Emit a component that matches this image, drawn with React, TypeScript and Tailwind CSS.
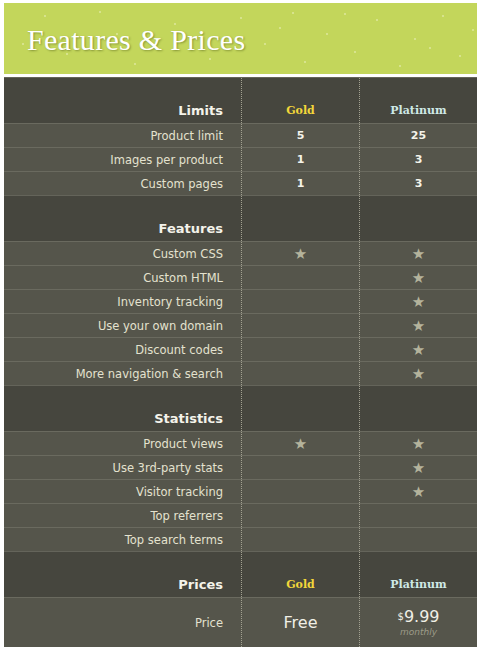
import React from "react";

type Row = { label: string; gold?: string; platinum?: string; star?: boolean };

const sections: { title: string; rows: Row[] }[] = [
  {
    title: "Limits",
    rows: [
      { label: "Product limit", gold: "5", platinum: "25" },
      { label: "Images per product", gold: "1", platinum: "3" },
      { label: "Custom pages", gold: "1", platinum: "3" },
    ],
  },
  {
    title: "Features",
    rows: [
      { label: "Custom CSS", gold: "★", platinum: "★", star: true },
      { label: "Custom HTML", platinum: "★", star: true },
      { label: "Inventory tracking", platinum: "★", star: true },
      { label: "Use your own domain", platinum: "★", star: true },
      { label: "Discount codes", platinum: "★", star: true },
      { label: "More navigation & search", platinum: "★", star: true },
    ],
  },
  {
    title: "Statistics",
    rows: [
      { label: "Product views", gold: "★", platinum: "★", star: true },
      { label: "Use 3rd-party stats", platinum: "★", star: true },
      { label: "Visitor tracking", platinum: "★", star: true },
      { label: "Top referrers" },
      { label: "Top search terms" },
    ],
  },
];

// speckles on the green banner
const specks = [
  [40, 12], [62, 50], [95, 8], [130, 60], [170, 20], [205, 55], [236, 14], [260, 40],
  [288, 9], [300, 58], [322, 30], [350, 48], [372, 16], [395, 62], [410, 35], [438, 12],
  [455, 52], [468, 26], [18, 40], [150, 42], [275, 24], [340, 10], [425, 44], [112, 30],
];

const colDivider = "border-r border-dotted border-r-[#a3a292]";

function PlanHeader({ title, showPlans }: { title: string; showPlans: boolean }) {
  return (
    <div className="grid grid-cols-[238px_118px_1fr] h-[46px] bg-[#46463e] border-t border-[#64645a]">
      <div className={`flex items-end justify-end pr-[18px] pb-[4px] ${colDivider}`}>
        <span className="text-[13px] leading-[16px] font-bold text-[#f4f3ea] font-['DejaVu_Sans',sans-serif]">
          {title}
        </span>
      </div>
      <div className={`flex items-end justify-center pb-[4px] ${colDivider}`}>
        {showPlans && (
          <span className="text-[11px] leading-[16px] font-bold text-[#f2d63a] font-['DejaVu_Serif',serif]">
            Gold
          </span>
        )}
      </div>
      <div className="flex items-end justify-center pb-[4px]">
        {showPlans && (
          <span className="text-[11px] leading-[16px] font-bold text-[#cfe9e6] font-['DejaVu_Serif',serif]">
            Platinum
          </span>
        )}
      </div>
    </div>
  );
}

function Cell({ value, star }: { value?: string; star?: boolean }) {
  if (!value) return null;
  return star ? (
    <span className="text-[15px] leading-none text-[#b4b39c]">{value}</span>
  ) : (
    <span className="text-[11px] font-bold text-[#f4f3ea]">{value}</span>
  );
}

export default function App() {
  return (
    <div className="min-h-screen bg-white pt-[3px] pl-[4px] font-['DejaVu_Sans',sans-serif]">
      <div className="relative h-[71px] bg-[#c3d65b] flex items-center pl-[23px] overflow-hidden">
        {specks.map(([x, y], i) => (
          <span
            key={i}
            className="absolute w-[2px] h-[2px] rounded-full bg-[#eef4c8] opacity-60"
            style={{ left: x, top: y }}
          />
        ))}
        <h1 className="relative text-[30px] leading-none text-white font-['Liberation_Serif',serif] [text-shadow:1px_1px_2px_rgba(60,70,10,0.45)] tracking-[0.3px] pt-[2px]">
          Features &amp; Prices
        </h1>
      </div>

      <div className="mt-[3px] bg-[#55554b]">
        {sections.map((s, si) => (
          <div key={s.title}>
            <PlanHeader title={s.title} showPlans={si === 0} />
            {s.rows.map((r) => (
              <div
                key={r.label}
                className="grid grid-cols-[238px_118px_1fr] h-[24px] border-t border-[#6a6a5f] text-[11.5px]"
              >
                <div className={`flex items-center justify-end pr-[18px] pt-[2px] text-[#e4e2cf] ${colDivider}`}>
                  {r.label}
                </div>
                <div className={`flex items-center justify-center pt-[2px] ${colDivider}`}>
                  <Cell value={r.gold} star={r.star} />
                </div>
                <div className="flex items-center justify-center pt-[2px]">
                  <Cell value={r.platinum} star={r.star} />
                </div>
              </div>
            ))}
          </div>
        ))}

        <PlanHeader title="Prices" showPlans />
        <div className="grid grid-cols-[238px_118px_1fr] h-[50px] border-t border-[#6a6a5f]">
          <div className={`flex items-center justify-end pr-[18px] pt-[3px] text-[11.5px] text-[#e4e2cf] ${colDivider}`}>
            Price
          </div>
          <div className={`flex items-center justify-center pt-[1px] ${colDivider}`}>
            <span className="text-[16px] text-[#f0efe6]">Free</span>
          </div>
          <div className="flex flex-col items-center justify-center pt-[1px]">
            <span className="text-[16px] leading-[18px] text-[#f0efe6]">
              <sup className="text-[10px] relative -top-[2px]">$</sup>9.99
            </span>
            <span className="text-[9px] italic leading-[12px] text-[#9c9b88]">monthly</span>
          </div>
        </div>
      </div>
    </div>
  );
}
